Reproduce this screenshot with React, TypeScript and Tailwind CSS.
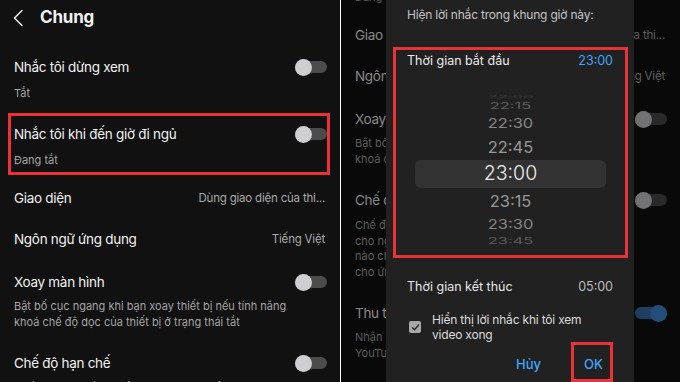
import React from "react"

function Toggle({ on = false }: { on?: boolean }) {
  return (
    <div
      className={`flex h-[12px] w-[32px] shrink-0 items-center rounded-full ${
        on ? "justify-end bg-[#3571ad]" : "bg-[#4b4b4b]"
      }`}
    >
      <div className={`h-[17px] w-[17px] shrink-0 rounded-full ${on ? "bg-[#3f8fdc]" : "bg-[#cfcfd3]"}`} />
    </div>
  )
}

function TitleLine({ title, right }: { title: string; right?: React.ReactNode }) {
  return (
    <div className="flex h-[20px] items-center justify-between">
      <span className="text-[13.5px] leading-[20px] tracking-[-0.3px] text-[#f1f1f1]">{title}</span>
      {right}
    </div>
  )
}

function Value({ children }: { children: string }) {
  return <span className="text-[11.5px] leading-[20px] tracking-[-0.2px] text-[#a9a9a9]">{children}</span>
}

function Desc({ children, className = "" }: { children: React.ReactNode; className?: string }) {
  return <p className={`text-[11px] leading-[15.5px] text-[#a4a4a4] ${className}`}>{children}</p>
}

function SettingsList({ highlight = false }: { highlight?: boolean }) {
  return (
    <div className="flex flex-col">
      <div className="flex h-[36px] items-center">
        <svg width="12" height="18" viewBox="0 0 12 18" className="ml-[12px]" fill="none">
          <path d="M10 1.5 2.5 9 10 16.5" stroke="#e6e6e6" strokeWidth="1.6" strokeLinecap="round" strokeLinejoin="round" />
        </svg>
        <h1 className="ml-[16px] text-[17px] font-bold tracking-[-0.2px] text-[#f4f4f4]">Chung</h1>
      </div>

      <div className="mt-[16px] px-[14px] pb-[5px] pr-[13px] pt-[5px]">
        <TitleLine title="Nhắc tôi dừng xem" right={<Toggle />} />
        <Desc className="mt-[8px] leading-[16px]">Tắt</Desc>
      </div>

      <div
        className={`ml-[8px] mr-[10px] mt-[7px] border-[3px] pb-[4px] pl-[3px] pt-[8px] ${
          highlight ? "border-[#ec3237]" : "border-transparent"
        }`}
      >
        <TitleLine title="Nhắc tôi khi đến giờ đi ngủ" right={<Toggle />} />
        <Desc className="mt-[8px] leading-[16px]">Đang tắt</Desc>
      </div>

      <div className="mt-[13px] px-[14px] pr-[15px]">
        <TitleLine title="Giao diện" right={<Value>Dùng giao diện của thi...</Value>} />
      </div>

      <div className="mt-[21px] px-[14px] pr-[15px]">
        <TitleLine title="Ngôn ngữ ứng dụng" right={<Value>Tiếng Việt</Value>} />
      </div>

      <div className="mt-[23px] px-[14px] pr-[13px]">
        <TitleLine title="Xoay màn hình" right={<Toggle />} />
        <Desc className="mt-[7px]">
          Bật bố cục ngang khi bạn xoay thiết bị nếu tính năng
          <br />
          khoá chế độ dọc của thiết bị ở trạng thái tắt
        </Desc>
      </div>

      <div className="mt-[23px] px-[14px] pr-[13px]">
        <TitleLine title="Chế độ hạn chế" right={<Toggle />} />
        <Desc className="mt-[8px]">
          Chế độ hạn chế giúp ẩn nội dung có thể dành
          <br />
          cho người lớn. Không có bộ lọc
          <br />
          nào chính xác 100%. Chế độ này chỉ áp dụng
          <br />
          cho ứng dụng này trên thiết bị này.
        </Desc>
      </div>

      <div className="mt-[23px] px-[14px] pr-[13px]">
        <TitleLine title="Thu thập huy hiệu" right={<Toggle on />} />
        <Desc className="mt-[7px]">
          Nhận huy hiệu khi bạn khám phá các tính năng
          <br />
          YouTube
        </Desc>
      </div>
    </div>
  )
}

type WheelItem = { label: string; h: string; scale: string; color: string }

const wheelAbove: WheelItem[] = [
  { label: "22:00", h: "h-[6px]", scale: "scale-y-[0.2]", color: "text-[#3c3c3c]" },
  { label: "22:15", h: "h-[12px]", scale: "scale-y-[0.5]", color: "text-[#5e5e5e]" },
  { label: "22:30", h: "h-[22px]", scale: "scale-y-[0.82]", color: "text-[#868686]" },
  { label: "22:45", h: "h-[26px]", scale: "scale-y-[0.92]", color: "text-[#979797]" },
]

const wheelBelow: WheelItem[] = [
  { label: "23:15", h: "h-[26px]", scale: "scale-y-[0.96]", color: "text-[#979797]" },
  { label: "23:30", h: "h-[20px]", scale: "scale-y-[0.8]", color: "text-[#868686]" },
  { label: "23:45", h: "h-[14px]", scale: "scale-y-[0.5]", color: "text-[#5a5a5a]" },
]

function WheelRow({ item }: { item: WheelItem }) {
  return (
    <div className={`flex items-center justify-center ${item.h}`}>
      <span className={`text-[16.5px] leading-none ${item.scale} ${item.color}`}>{item.label}</span>
    </div>
  )
}

function TimeDialog() {
  return (
    <div className="absolute -bottom-[30px] left-[45px] top-0 w-[248px] bg-[#212121]">
      <p className="pl-[21px] pt-[6px] text-[12px] leading-[18px] tracking-[-0.2px] text-[#c4c4c4]">
        Hiện lời nhắc trong khung giờ này:
      </p>

      <div className="ml-[7px] mt-[23px] h-[211px] w-[235px] border-[3px] border-[#ec3237]">
        <div className="flex items-center justify-between pl-[11px] pr-[12px] pt-[2px] text-[12.5px] leading-[18px]">
          <span className="text-[#ececec]">Thời gian bắt đầu</span>
          <span className="text-[#3ea6ff]">23:00</span>
        </div>
        <div className="mt-[24px] flex flex-col">
          {wheelAbove.map((item) => (
            <WheelRow key={item.label} item={item} />
          ))}
          <div className="mx-[19px] flex h-[28px] items-center justify-center rounded-[6px] bg-[#323232]">
            <span className="text-[19.5px] font-light leading-none text-[#ececec]">23:00</span>
          </div>
          {wheelBelow.map((item) => (
            <WheelRow key={item.label} item={item} />
          ))}
        </div>
      </div>

      <div className="mt-[20px] flex items-center justify-between pl-[21px] pr-[21px] text-[12.5px] leading-[18px]">
        <span className="text-[#e6e6e6]">Thời gian kết thúc</span>
        <span className="text-[#bdbdbd]">05:00</span>
      </div>

      <div className="mt-[16px] flex items-center pl-[23px]">
        <div className="flex h-[12px] w-[12px] shrink-0 items-center justify-center rounded-[2px] bg-[#a8a8a8]">
          <svg width="9" height="9" viewBox="0 0 9 9" fill="none">
            <path d="M1.5 4.8 3.5 6.8 7.6 2" stroke="#2b2b2b" strokeWidth="1.4" strokeLinecap="round" strokeLinejoin="round" />
          </svg>
        </div>
        <p className="ml-[11px] text-[12px] leading-[15px] tracking-[-0.2px] text-[#dcdcdc]">
          Hiển thị lời nhắc khi tôi xem
          <br />
          video xong
        </p>
      </div>

      <div className="flex items-start justify-end pr-[21px] text-[13px] font-medium leading-[16px] text-[#3ea6ff]">
        <span className="pt-[14px]">Hủy</span>
        <div className="ml-[30px] h-[40px] border-[3px] border-[#ec3237] pl-[10px] pr-[7px] pt-[11px]">OK</div>
      </div>
    </div>
  )
}

export default function App() {
  return (
    <div className="flex h-[382px] w-[680px] overflow-hidden bg-white font-['Inter','Noto_Sans',sans-serif]">
      <div className="h-full w-[340px] shrink-0 overflow-hidden bg-[#111111]">
        <SettingsList highlight />
      </div>
      <div className="h-full w-[1px] shrink-0 bg-white" />
      <div className="relative h-full w-[339px] shrink-0 overflow-hidden bg-[#111111]">
        <div className="-mt-[163px]">
          <SettingsList />
        </div>
        <div className="absolute inset-0 bg-black/[0.45]" />
        <TimeDialog />
      </div>
    </div>
  )
}
